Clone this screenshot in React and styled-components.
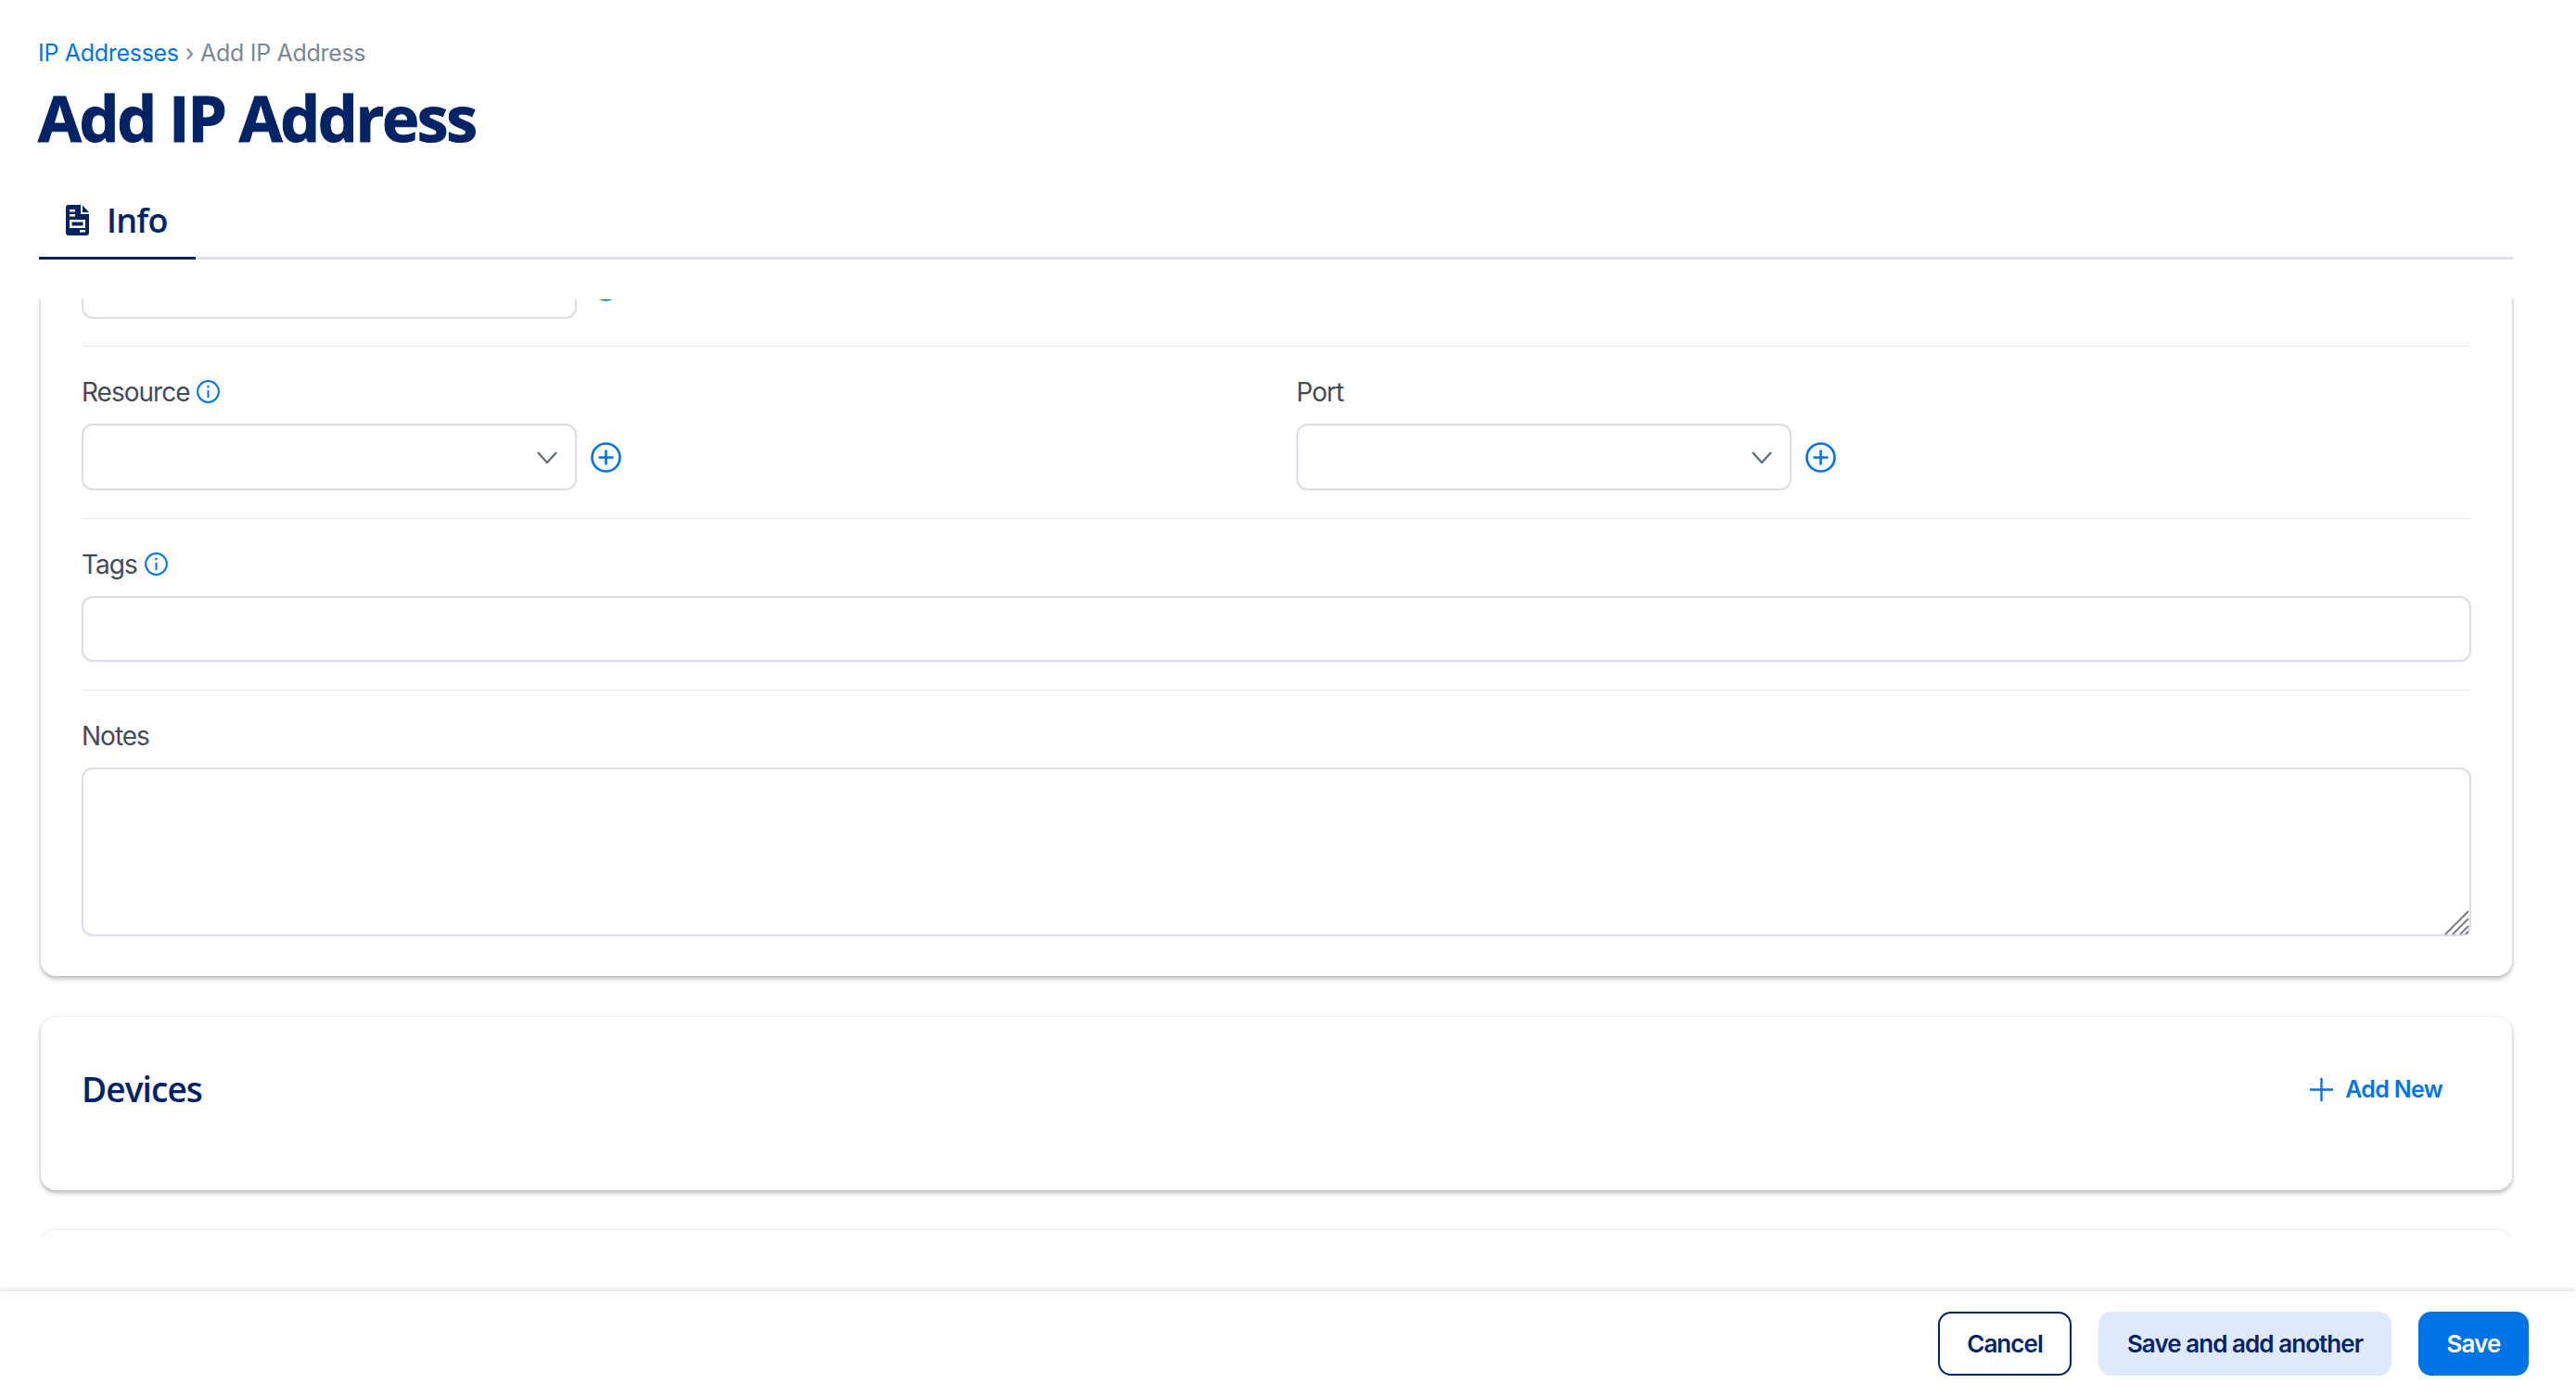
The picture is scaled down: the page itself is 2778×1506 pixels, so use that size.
import React from 'react';
import styled, { createGlobalStyle } from 'styled-components';

const NAVY = '#002366';
const BLUE = '#0073e6';

const Global = createGlobalStyle`
  html, body { margin: 0; padding: 0; height: 100%; background: #fff; }
  #root { height: 100%; }
  * { box-sizing: border-box; }
`;

const Page = styled.div`
  height: 1506px;
  display: flex;
  flex-direction: column;
  overflow: hidden;
  font-family: "Inter", "Liberation Sans", sans-serif;
  background: #fff;
`;
const Header = styled.header`
  height: 323px;
  flex: none;
  padding: 40px 68px 0 41px;
`;
const Crumbs = styled.nav`
  display: flex;
  gap: 7px;
  height: 34px;
  align-items: center;
  font-size: 25px;
  letter-spacing: -0.3px;
  color: #7b8794;
`;
const CrumbLink = styled.a`
  color: ${BLUE};
`;
const Title = styled.h1`
  margin: 16px 0 0;
  height: 74px;
  line-height: 74px;
  font-family: "Open Sans", sans-serif;
  font-weight: 700;
  font-size: 68px;
  letter-spacing: -2.4px;
  -webkit-text-stroke: 1px ${NAVY};
  color: ${NAVY};
`;
const Tabs = styled.div`
  margin: 39px 0 0 1px;
  height: 77px;
  border-bottom: 3px solid #dee2e6;
  display: flex;
`;
const Tab = styled.div`
  width: 169px;
  height: 77px;
  border-bottom: 3px solid ${NAVY};
  display: flex;
  align-items: center;
  gap: 19px;
  padding: 0 0 6px 29px;
  font-family: "Open Sans", sans-serif;
  font-size: 36px;
  font-weight: 600;
  letter-spacing: -0.8px;
  color: ${NAVY};
`;
const Scroll = styled.main`
  height: 1012px;
  flex: none;
  overflow: hidden;
  padding: 0 69px 0 44px;
`;
const Card = styled.section`
  background: #fff;
  border-radius: 16px;
  box-shadow: 0 3px 5px rgba(0, 0, 0, 0.26), 0 0 3px rgba(0, 0, 0, 0.1);
`;
const FormCard = styled(Card)`
  margin-top: -60px;
  padding: 9px 44px 43px;
`;
const Row = styled.div`
  display: grid;
  grid-template-columns: ${p => (p.$cols === 2 ? '1fr 1fr' : '1fr')};
  column-gap: 43px;
  padding: ${p => (p.$first ? '0' : '31px')} 0 ${p => (p.$last ? '0' : p.$first ? '29px' : '30px')};
  border-bottom: ${p => (p.$last ? 'none' : '1px solid #e6e8ec')};
`;
const Label = styled.label`
  height: 36px;
  margin-bottom: 16px;
  display: flex;
  align-items: center;
  gap: 8px;
  font-size: 28px;
  letter-spacing: -1px;
  color: #454b54;
`;
const SelectLine = styled.div`
  display: flex;
  align-items: center;
  gap: 15px;
`;
const Select = styled.div`
  width: 534px;
  height: 72px;
  border: 2px solid #dadce6;
  border-radius: 12px;
  display: flex;
  align-items: center;
  justify-content: flex-end;
  padding: 1px 19px 0 0;
  background: #fff;
`;
const TextInput = styled.input`
  display: block;
  width: 100%;
  height: 71px;
  border: 2px solid #dadce6;
  border-radius: 12px;
  background: #fff;
  outline: none;
`;
const AreaWrap = styled.div`
  position: relative;
  height: 182px;
`;
const Area = styled.textarea`
  display: block;
  width: 100%;
  height: 100%;
  border: 2px solid #dadce6;
  border-radius: 12px;
  background: #fff;
  outline: none;
  resize: none;
`;
const Grip = styled.svg`
  position: absolute;
  right: 2px;
  bottom: 1px;
`;
const DevicesCard = styled(Card)`
  margin-top: 44px;
  height: 187px;
  padding: 50px 75px 0 44px;
  display: flex;
  justify-content: space-between;
  align-items: flex-start;
`;
const CardTitle = styled.h2`
  margin: 0;
  height: 56px;
  line-height: 56px;
  font-family: "Open Sans", sans-serif;
  font-size: 37px;
  font-weight: 600;
  letter-spacing: -0.9px;
  color: ${NAVY};
`;
const AddNew = styled.button`
  height: 56px;
  border: 0;
  padding: 0;
  background: none;
  display: flex;
  align-items: center;
  gap: 13px;
  font-family: inherit;
  font-size: 25px;
  font-weight: 600;
  letter-spacing: -0.7px;
  color: ${BLUE};
`;
const NextCard = styled(Card)`
  margin-top: 43px;
  height: 187px;
`;
const Footer = styled.footer`
  margin-top: 58px;
  height: 113px;
  flex: none;
  background: #fff;
  box-shadow: 0 -1px 5px rgba(40, 50, 110, 0.2);
  display: flex;
  justify-content: flex-end;
  align-items: flex-start;
  gap: 29px;
  padding: 22px 51px 0 0;
`;
const Btn = styled.button`
  height: 69px;
  width: ${p => p.$w}px;
  border-radius: 14px;
  border: ${p => (p.$kind === 'outline' ? `2px solid ${NAVY}` : '0')};
  background: ${p => (p.$kind === 'primary' ? BLUE : p.$kind === 'soft' ? '#dfe9fc' : '#fff')};
  color: ${p => (p.$kind === 'primary' ? '#fff' : NAVY)};
  font-family: inherit;
  font-size: 26px;
  font-weight: 600;
  letter-spacing: -0.95px;
`;
const InfoSvg = styled.svg`
  margin-top: -2px;
`;

const DocIcon = () => (
  <svg width="25" height="33" viewBox="0 0 25 33">
    <path d="M3 0h13v10h9v20a3 3 0 0 1-3 3H3a3 3 0 0 1-3-3V3a3 3 0 0 1 3-3z" fill={NAVY} />
    <path d="M18 0.5 25 8h-7z" fill={NAVY} />
    <g fill="#fff">
      <rect x="4" y="5" width="6" height="2.5" />
      <rect x="4" y="10" width="6" height="2.5" />
      <rect x="15" y="27" width="6" height="2.5" />
      <path d="M4 16h17v9H4zm2.5 2.5v4h12v-4z" fillRule="evenodd" />
    </g>
  </svg>
);
const InfoIcon = () => (
  <InfoSvg width="25" height="25" viewBox="0 0 25 25" fill="none" stroke={BLUE} strokeWidth="2">
    <circle cx="12.5" cy="12.5" r="11.4" />
    <path d="M12.5 11v8" />
    <circle cx="12.5" cy="7" r="1.3" fill={BLUE} stroke="none" />
  </InfoSvg>
);
const Chevron = () => (
  <svg width="22" height="14" viewBox="0 0 22 14" fill="none" stroke="#686e78" strokeWidth="2.4">
    <path d="M1 1l10 11L21 1" />
  </svg>
);
const PlusCircle = () => (
  <svg width="33" height="33" viewBox="0 0 33 33" fill="none" stroke={BLUE} strokeWidth="2.6">
    <circle cx="16.5" cy="16.5" r="15" />
    <path d="M16.5 8.5v16M8.5 16.5h16" />
  </svg>
);
const Plus = () => (
  <svg width="25" height="25" viewBox="0 0 25 25" fill="none" stroke={BLUE} strokeWidth="2.4">
    <path d="M12.5 0v25M0 12.5h25" />
  </svg>
);
const ResizeGrip = () => (
  <Grip width="27" height="27" viewBox="0 0 27 27" fill="none" stroke="#7d7d7d" strokeWidth="2">
    <path d="M1 26 26 1M9 26 26 9M17 26l9-9M23 26l3-3" />
  </Grip>
);

const SelectField = () => (
  <SelectLine>
    <Select><Chevron /></Select>
    <PlusCircle />
  </SelectLine>
);

export default function App() {
  return (
    <Page>
      <Global />
      <Header>
        <Crumbs>
          <CrumbLink>IP Addresses</CrumbLink>
          <span>›</span>
          <span>Add IP Address</span>
        </Crumbs>
        <Title>Add IP Address</Title>
        <Tabs>
          <Tab><DocIcon />Info</Tab>
        </Tabs>
      </Header>
      <Scroll>
        <FormCard>
          <Row $first>
            <SelectField />
          </Row>
          <Row $cols={2}>
            <div>
              <Label>Resource <InfoIcon /></Label>
              <SelectField />
            </div>
            <div>
              <Label>Port</Label>
              <SelectField />
            </div>
          </Row>
          <Row>
            <div>
              <Label>Tags <InfoIcon /></Label>
              <TextInput />
            </div>
          </Row>
          <Row $last>
            <div>
              <Label>Notes</Label>
              <AreaWrap>
                <Area />
                <ResizeGrip />
              </AreaWrap>
            </div>
          </Row>
        </FormCard>
        <DevicesCard>
          <CardTitle>Devices</CardTitle>
          <AddNew><Plus />Add New</AddNew>
        </DevicesCard>
        <NextCard />
      </Scroll>
      <Footer>
        <Btn $kind="outline" $w={144}>Cancel</Btn>
        <Btn $kind="soft" $w={316}>Save and add another</Btn>
        <Btn $kind="primary" $w={119}>Save</Btn>
      </Footer>
    </Page>
  );
}
